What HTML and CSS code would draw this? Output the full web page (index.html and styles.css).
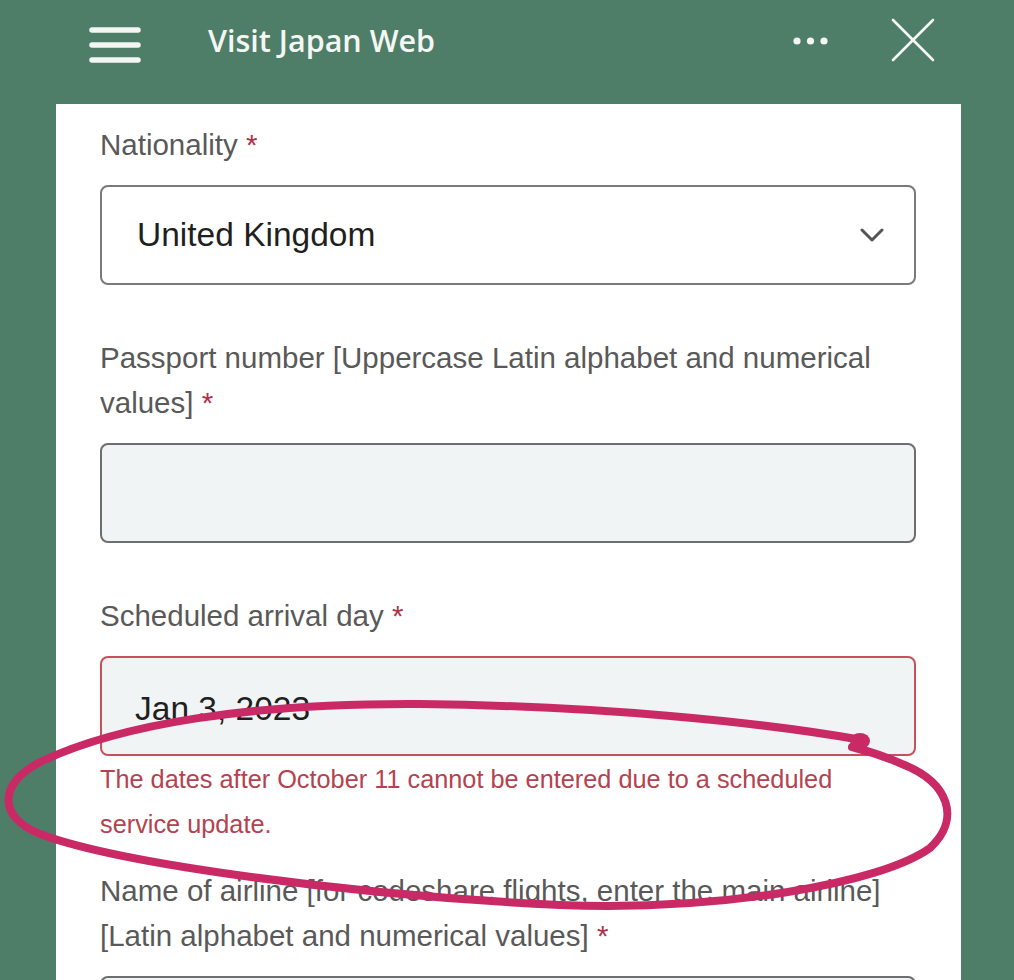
FILE: index.html
```html
<!DOCTYPE html>
<html lang="en">
<head>
<meta charset="utf-8">
<title>Visit Japan Web</title>
<link rel="stylesheet" href="styles.css">
</head>
<body>
<div class="page">
  <header class="topbar">
    <svg class="hamburger" width="52" height="36" viewBox="0 0 52 36" aria-hidden="true">
      <g stroke="#f4f6f4" stroke-width="5.5" stroke-linecap="round">
        <line x1="3" y1="3" x2="49" y2="3"/>
        <line x1="3" y1="18" x2="49" y2="18"/>
        <line x1="3" y1="33" x2="49" y2="33"/>
      </g>
    </svg>
    <div class="title">Visit Japan Web</div>
    <svg class="dots" width="36" height="8" viewBox="0 0 36 8" aria-hidden="true">
      <g fill="#f4f6f4">
        <circle cx="4" cy="4" r="3.6"/>
        <circle cx="17.5" cy="4" r="3.6"/>
        <circle cx="31" cy="4" r="3.6"/>
      </g>
    </svg>
    <svg class="close" width="44" height="44" viewBox="0 0 44 44" aria-hidden="true">
      <g stroke="#f4f6f4" stroke-width="2.6" stroke-linecap="round">
        <line x1="2" y1="2" x2="42" y2="42"/>
        <line x1="42" y1="2" x2="2" y2="42"/>
      </g>
    </svg>
  </header>

  <main class="card">
    <div class="field">
      <div class="label">Nationality <span class="req">*</span></div>
      <div class="control select">
        <span class="value">United Kingdom</span>
        <svg class="chevron" width="24" height="14" viewBox="0 0 24 14" aria-hidden="true">
          <polyline points="2,2 12,12 22,2" fill="none" stroke="#555" stroke-width="3" stroke-linecap="round" stroke-linejoin="round"/>
        </svg>
      </div>
    </div>

    <div class="field">
      <div class="label">Passport number [Uppercase Latin alphabet and numerical values] <span class="req">*</span></div>
      <div class="control input"></div>
    </div>

    <div class="field">
      <div class="label">Scheduled arrival day <span class="req">*</span></div>
      <div class="control input error-box">
        <span class="value">Jan 3, 2023</span>
      </div>
      <div class="error-msg">The dates after October 11 cannot be entered due to a scheduled service update.</div>
    </div>

    <div class="field field-tight">
      <div class="label">Name of airline [for codeshare flights, enter the main airline] [Latin alphabet and numerical values] <span class="req">*</span></div>
      <div class="control input"></div>
    </div>
  </main>

  <svg class="scribble" width="1014" height="980" viewBox="0 0 1014 980" aria-hidden="true">
    <path d="M 862 740
             C 760 722, 600 706, 420 704
             C 250 703, 120 724, 40 762
             C -4 786, 0 818, 40 834
             C 120 864, 350 895, 560 905
             C 720 911, 880 884, 930 848
             C 962 818, 948 782, 902 764
             C 884 756, 868 751, 852 747"
          fill="none" stroke="#c92a66" stroke-width="8" stroke-linecap="round" stroke-linejoin="round"/>
    <ellipse cx="860" cy="741" rx="10" ry="8" fill="#c92a66"/>
  </svg>
</div>
</body>
</html>
```

FILE: styles.css
```css
html, body {
  margin: 0;
  padding: 0;
}

body {
  background: #4f7e68;
  font-family: "Liberation Sans", Arial, sans-serif;
  overflow: hidden;
}

.page {
  position: relative;
  width: 1014px;
  height: 980px;
  overflow: hidden;
}

.topbar {
  height: 82px;
  display: flex;
  align-items: center;
  padding: 0 79px 0 89px;
  box-sizing: border-box;
}

.hamburger {
  margin-top: 8px;
  flex: none;
}

.title {
  margin-left: 67px;
  color: #f4f6f4;
  font-family: "Open Sans", "Noto Sans", sans-serif;
  font-weight: 600;
  font-size: 30.5px;
  line-height: 1;
  margin-top: -2px;
}

.dots {
  margin-left: auto;
  flex: none;
}

.close {
  margin-left: 62px;
  flex: none;
  margin-top: -2px;
}

.card {
  margin: 22px 0 0 56px;
  width: 905px;
  height: 1000px;
  background: #ffffff;
  padding: 18px 45px 0 44px;
  box-sizing: border-box;
}

.field {
  margin-bottom: 50px;
}

.field-tight {
  margin-top: -29px;
}

.label {
  color: #595959;
  font-size: 29.5px;
  line-height: 45px;
  margin-bottom: 18px;
}

.req {
  color: #ad3447;
}

.control {
  height: 100px;
  box-sizing: border-box;
  border-radius: 8px;
  border: 2px solid #6e6e6e;
  display: flex;
  align-items: center;
  padding: 0 30px 0 35px;
}

.select {
  background: #ffffff;
  border-color: #7a7a7a;
}

.input {
  background: #f1f4f5;
}

.error-box {
  border-color: #c4525c;
  padding-left: 33px;
  padding-top: 6px;
}

.value {
  color: #1f1f1f;
  font-size: 33.5px;
}

.chevron {
  margin-left: auto;
}

.error-msg {
  color: #b5424f;
  font-size: 25.3px;
  line-height: 45px;
  margin-top: 1px;
}

.scribble {
  position: absolute;
  left: 0;
  top: 0;
  pointer-events: none;
}
```
